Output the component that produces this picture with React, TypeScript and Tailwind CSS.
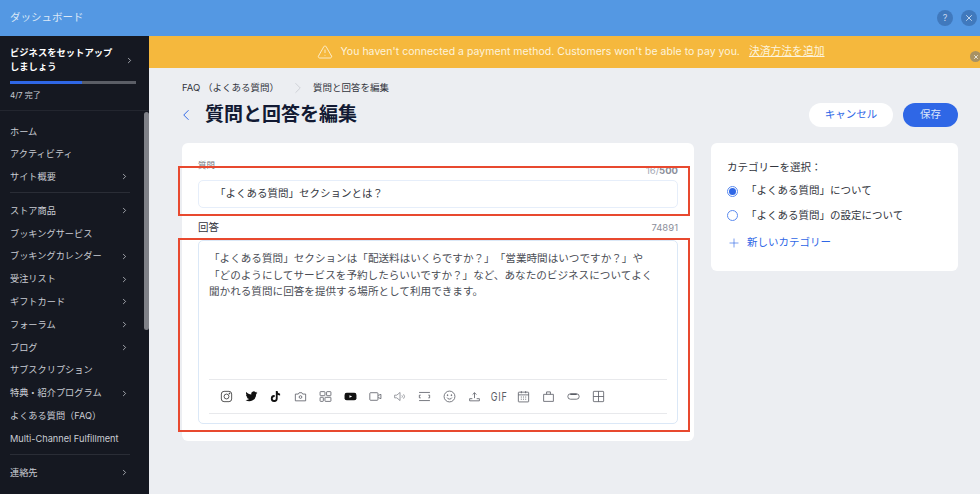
import { ChevronRight, ChevronLeft, TriangleAlert, X, Plus } from 'lucide-react'
import type { ReactNode } from 'react'

const font = { fontFamily: 'Inter, "Noto Sans CJK JP", "Liberation Sans", sans-serif' }

type NavItem = { label: string; arrow?: boolean }

const navGroups: NavItem[][] = [
  [{ label: 'ホーム' }, { label: 'アクティビティ' }, { label: 'サイト概要', arrow: true }],
  [
    { label: 'ストア商品', arrow: true },
    { label: 'ブッキングサービス' },
    { label: 'ブッキングカレンダー', arrow: true },
    { label: '受注リスト', arrow: true },
    { label: 'ギフトカード', arrow: true },
    { label: 'フォーラム', arrow: true },
    { label: 'ブログ', arrow: true },
    { label: 'サブスクリプション' },
    { label: '特典・紹介プログラム', arrow: true },
    { label: 'よくある質問（FAQ）' },
    { label: 'Multi-Channel Fulfillment' },
  ],
  [{ label: '連絡先', arrow: true }],
]

function Sidebar() {
  return (
    <aside className="relative w-[149px] shrink-0 overflow-hidden bg-[#151821] text-[#c9ccd3]">
      <div className="h-[75px] border-b border-[#23262f] pl-[10px] pr-[15px] pt-[10px]">
        <div className="flex items-center justify-between">
          <div className="text-[9.3px] font-bold leading-[14px] text-white">
            ビジネスをセットアップ
            <br />
            しましょう
          </div>
          <ChevronRight className="size-[9px] text-[#c9ccd3]" strokeWidth={2} />
        </div>
        <div className="mt-[7px] h-[3px] w-[126px] bg-[#5b5e66]">
          <div className="h-full w-[72px] bg-[#2f67e6]" />
        </div>
        <div className="mt-[5px] text-[8px] leading-[12px] text-[#c9ccd3]">4/7 完了</div>
      </div>
      <div className="pt-[9px]">
        {navGroups.map((group, i) => (
          <div key={i} className={i > 0 ? 'mt-[4px]' : ''}>
            {i > 0 && <div className="mx-[10px] mb-[6px] h-px w-[120px] bg-[#2a2d36]" />}
            {group.map((item) => (
              <div
                key={item.label}
                className="flex h-[22.8px] items-center justify-between pl-[10px] pr-[20px] text-[9.2px] whitespace-nowrap"
              >
                <span>{item.label}</span>
                {item.arrow && <ChevronRight className="size-[9px]" strokeWidth={2} />}
              </div>
            ))}
          </div>
        ))}
      </div>
      <div className="absolute right-0 top-[76px] h-[218px] w-[5px] rounded-full bg-[#7f8188]" />
    </aside>
  )
}

function Card({ className, children }: { className: string; children: ReactNode }) {
  return <section className={`rounded-[6px] bg-white ${className}`}>{children}</section>
}

const iconProps = {
  width: 13,
  height: 13,
  viewBox: '0 0 24 24',
  fill: 'none',
  stroke: '#5a5d65',
  strokeWidth: 1.5,
}

const toolbarIcons: ReactNode[] = [
  <svg {...iconProps} stroke="#333"><rect x="2.5" y="2.5" width="19" height="19" rx="5" /><circle cx="12" cy="12" r="4.5" /><circle cx="17.5" cy="6.5" r=".8" fill="#333" /></svg>,
  <svg {...iconProps} stroke="none" fill="#111"><path d="M23 4.900c-.8.4-1.700.6-2.600.7.900-.6 1.700-1.400 2-2.500-.9.5-1.900.9-2.900 1.100a4.500 4.500 0 0 0-7.800 4.100C7.900 8.100 4.600 6.300 2.400 3.500c-1.200 2.100-.6 4.700 1.400 6-.7 0-1.400-.2-2-.6 0 2.200 1.500 4.100 3.600 4.500-.7.2-1.400.2-2 .1.600 1.800 2.300 3.100 4.200 3.100A9.100 9.100 0 0 1 1 18.500 12.800 12.800 0 0 0 20.700 7.100c.9-.6 1.700-1.400 2.300-2.200z" /></svg>,
  <svg {...iconProps} stroke="none" fill="#111"><path d="M16 2h-3.400v13.700a2.900 2.900 0 1 1-2.900-2.900c.3 0 .6 0 .8.100V9.400a6.300 6.300 0 1 0 5.500 6.300V8.700a7.800 7.800 0 0 0 4.500 1.400V6.700A4.600 4.600 0 0 1 16 2z" /></svg>,
  <svg {...iconProps}><path d="M2.500 7.500h5.500l1.500-2.500h5L16 7.500h5.500V20h-19z" /><circle cx="12" cy="13" r="2.500" /></svg>,
  <svg {...iconProps}><rect x="2" y="3" width="9" height="7.500" rx="1" /><rect x="14" y="3" width="8" height="7.500" rx="1" /><rect x="2" y="13.500" width="6" height="7.500" rx="1" /><rect x="11" y="13.500" width="11" height="7.500" rx="1" /></svg>,
  <svg {...iconProps} stroke="none" fill="#111"><path d="M5 5h14a4 4 0 0 1 4 4v6a4 4 0 0 1-4 4H5a4 4 0 0 1-4-4V9a4 4 0 0 1 4-4z" /><path d="M10 9.500l5 2.500-5 2.500z" fill="#fff" /></svg>,
  <svg {...iconProps}><rect x="1.500" y="5" width="15" height="14" rx="1.500" /><path d="M17 10l5-2v8l-5-2" /></svg>,
  <svg {...iconProps} stroke="#85888f"><path d="M3 9.500v5h4l6 5v-15l-6 5zM16.500 10a3 3 0 0 1 0 4M19.500 8a6 6 0 0 1 0 8" /></svg>,
  <svg {...iconProps}><path d="M2 4.500h20M2 19.500h20" /><path d="M5 9.500H2.500v5H5M19 9.500h2.500v5H19" /></svg>,
  <svg {...iconProps}><circle cx="12" cy="12" r="10" /><path d="M7.500 14a5 5 0 0 0 9 0" /><circle cx="8.500" cy="9.500" r=".8" fill="#5a5d65" /><circle cx="15.500" cy="9.500" r=".8" fill="#5a5d65" /></svg>,
  <svg {...iconProps}><path d="M12 15V5M8.500 8.500L12 5l3.500 3.500M3 16v4h18v-4h-5M3 16h5" /></svg>,
  <span className="inline-block scale-x-75 text-[12px] leading-[14px] tracking-[1px] text-[#5a5d65]">GIF</span>,
  <svg {...iconProps}><rect x="2.500" y="4" width="19" height="18" rx="1" /><path d="M2.500 9h19M8 2v4M16 2v4M7 13h2M11 13h2M15 13h2M7 17h2M11 17h2M15 17h2" /></svg>,
  <svg {...iconProps}><path d="M3 8h18v13H3zM8.500 8V3.500h7V8" /></svg>,
  <svg {...iconProps}><rect x="1.500" y="7" width="21" height="10" rx="5" /><path d="M6 8h12" strokeWidth="2.500" /></svg>,
  <svg {...iconProps}><rect x="2.500" y="2.500" width="19" height="19" rx="1" /><path d="M12 2.500v19M2.500 12h19" /></svg>,
]

function Radio({ checked, label }: { checked?: boolean; label: string }) {
  return (
    <div className="flex h-[24.5px] items-center gap-[8px] text-[10.5px] text-[#32353d]">
      <span className="flex size-[11px] items-center justify-center rounded-full border border-[#5b8bef] bg-white">
        {checked && <span className="size-[7px] rounded-full bg-[#2f67e6]" />}
      </span>
      <span>{label}</span>
    </div>
  )
}

export default function App() {
  return (
    <div className="flex h-[494px] w-[980px] flex-col overflow-hidden bg-[#eceef2] [text-spacing-trim:space-all]" style={font}>
      <header className="flex h-[36px] shrink-0 items-center justify-between bg-[#5498e3] pl-[10px] pr-[3px]">
        <span className="text-[10.5px] text-[#dbe8f7]">ダッシュボード</span>
        <div className="flex gap-[8px]">
          <span className="flex size-[16px] items-center justify-center rounded-full bg-[#4079bd] text-[9px] text-[#c7d8ee]">?</span>
          <span className="flex size-[16px] items-center justify-center rounded-full bg-[#4079bd] text-[#dbe8f7]">
            <X className="size-[10px]" strokeWidth={2} />
          </span>
        </div>
      </header>
      <div className="flex min-h-0 flex-1">
        <Sidebar />
        <main className="min-w-0 flex-1">
          <div className="relative flex h-[32px] items-center justify-center bg-[#f5b83d] pl-[13px] text-[10.5px] text-[#fdf3dc]">
            <TriangleAlert className="mr-[7px] size-[16px]" strokeWidth={1.3} />
            <span className="mr-[9px] tracking-[0.03px]">You haven't connected a payment method. Customers won't be able to pay you.</span>
            <span className="text-[10.8px] underline">決済方法を追加</span>
            <span className="absolute right-[-1px] top-[15px] flex size-[11px] items-center justify-center rounded-full bg-[#a89263] text-white">
              <X className="size-[6px]" strokeWidth={3} />
            </span>
          </div>

          <div className="pl-[33px] pr-[22px]">
            <nav className="mt-[13px] flex h-[14px] items-center text-[9.5px] leading-[14px] text-[#32353d]">
              <span>FAQ （よくある質問）</span>
              <ChevronRight className="ml-[10px] mr-[6px] size-[18px] text-[#c4c7ce]" strokeWidth={1} />
              <span>質問と回答を編集</span>
            </nav>

            <div className="mt-[5px] flex h-[30px] items-center justify-between">
              <div className="flex items-center">
                <ChevronLeft className="ml-[-5px] mr-[10px] size-[18px] text-[#2f67e6]" strokeWidth={1.3} />
                <h1 className="text-[19px] font-bold leading-[30px] text-[#121a33]">質問と回答を編集</h1>
              </div>
              <div className="flex gap-[10px] text-[10.5px]">
                <button className="h-[24px] w-[84px] rounded-full bg-white text-[#2f67e6]">キャンセル</button>
                <button className="h-[24px] w-[55px] rounded-full bg-[#2f67e6] text-[#dbe6fb]">保存</button>
              </div>
            </div>

            <div className="mt-[13px] flex items-start gap-[17px]">
              <Card className="relative h-[298px] w-[512px] px-[16px]">
                <div className="flex h-[37px] items-start justify-between pt-[16px]">
                  <span className="text-[8.5px] leading-[13px] text-[#777a82]">質問</span>
                  <span className="mt-[6px] text-[9.5px] leading-[12px] text-[#a4a8b4]">
                    16/<b className="text-[#8b8e9a]">500</b>
                  </span>
                </div>
                <div className="flex h-[28px] items-center rounded-[5px] border border-[#e6eefa] pl-[16px] text-[10.5px] text-[#32353d]">
                  「よくある質問」セクションとは？
                </div>
                <div className="mt-[8px] flex h-[24px] items-center justify-between">
                  <span className="text-[10.5px] text-[#32353d]">回答</span>
                  <span className="text-[9.5px] text-[#8b8e9a]">74891</span>
                </div>
                <div className="h-[184px] rounded-[5px] border border-[#dbe8f7] px-[10px] pt-[10px]">
                  <p className="h-[128px] text-[10.6px] leading-[16.5px] text-[#4a4d55]">
                    「よくある質問」セクションは「配送料はいくらですか？」「営業時間はいつですか？」や
                    <br />
                    「どのようにしてサービスを予約したらいいですか？」など、あなたのビジネスについてよく
                    <br />
                    聞かれる質問に回答を提供する場所として利用できます。
                  </p>
                  <div className="flex h-[35px] items-center border-y border-[#e8e9ec] pl-[5px]">
                    {toolbarIcons.map((icon, i) => (
                      <span key={i} className="flex h-[14px] w-[24.8px] items-center justify-center">{icon}</span>
                    ))}
                  </div>
                </div>
                <div className="absolute left-[-4px] top-[23px] h-[50px] w-[512px] border-2 border-[#e8492f]" />
                <div className="absolute left-[-4px] top-[95px] h-[194px] w-[512px] border-2 border-[#e8492f]" />
              </Card>

              <Card className="h-[128px] w-[247px] px-[16px] pt-[17px]">
                <div className="mb-[4px] text-[10.5px] leading-[15px] text-[#32353d]">カテゴリーを選択：</div>
                <Radio checked label="「よくある質問」について" />
                <Radio label="「よくある質問」の設定について" />
                <div className="mt-[3px] flex h-[24px] items-center gap-[6px] text-[10.5px] text-[#2f67e6]">
                  <Plus className="size-[14px]" strokeWidth={1.1} />
                  <span>新しいカテゴリー</span>
                </div>
              </Card>
            </div>
          </div>
        </main>
      </div>
    </div>
  )
}
